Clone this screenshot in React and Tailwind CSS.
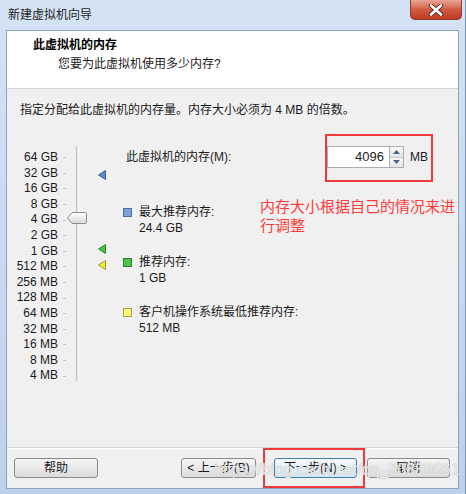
const FONT = { fontFamily: '"Liberation Sans", "Noto Sans CJK SC", sans-serif' }

// Scale labels from top to bottom
const STEPS = [
  '64 GB', '32 GB', '16 GB', '8 GB', '4 GB', '2 GB', '1 GB', '512 MB',
  '256 MB', '128 MB', '64 MB', '32 MB', '16 MB', '8 MB', '4 MB',
]

const LEGEND = [
  { label: '最大推荐内存:', value: '24.4 GB', box: 'bg-[#7fa2d4] border-[#4d6f9f]' },
  { label: '推荐内存:', value: '1 GB', box: 'bg-[#4cc24c] border-[#2a8a2a]' },
  { label: '客户机操作系统最低推荐内存:', value: '512 MB', box: 'bg-[#fff67a] border-[#a8a050]' },
]

function Marker({ fill, stroke, className }) {
  return (
    <svg width="8" height="10" viewBox="0 0 8 10" className={className}>
      <path d="M0.5 5 L7.5 0.5 L7.5 9.5 Z" fill={fill} stroke={stroke} strokeWidth="1" />
    </svg>
  )
}

function Button({ children, focused, className = '' }) {
  return (
    <div
      className={[
        'h-[20px] flex items-center justify-center rounded-[3px] border text-[12px] text-[#1a1a1a]',
        focused
          ? 'border-[#3c7fb1] bg-gradient-to-b from-[#f3f9fd] to-[#d6e9f6]'
          : 'border-[#8a8a8a] bg-gradient-to-b from-[#f4f4f4] to-[#dcdcdc]',
        className,
      ].join(' ')}
    >
      {children}
    </div>
  )
}

export default function App() {
  return (
    <div
      style={FONT}
      className="relative w-[466px] h-[494px] overflow-hidden flex flex-col bg-gradient-to-b from-[#d3e3f4] to-[#bcd2ea] border-r border-[#7b93b0]"
    >
      {/* ── Title bar ─────────────────────────────────────── */}
      <div className="h-[30px] shrink-0 flex items-start">
        <span className="ml-[8px] mt-[7px] text-[12px] leading-[16px] text-[#1e1e1e]">新建虚拟机向导</span>
        <div className="ml-auto mr-[3px] w-[52px] h-[20px] rounded-b-[5px] border border-t-0 border-[#8a3b30] bg-gradient-to-b from-[#e9a596] via-[#d25a43] to-[#c0391f] flex items-center justify-center">
          <svg width="16" height="12" viewBox="0 0 16 12">
            <path d="M3 1.5 L13 10.5 M13 1.5 L3 10.5" stroke="#5a2a22" strokeWidth="4.4" strokeLinecap="round" />
            <path d="M3 1.5 L13 10.5 M13 1.5 L3 10.5" stroke="#ffffff" strokeWidth="2.6" strokeLinecap="round" />
          </svg>
        </div>
      </div>

      {/* ── Client area ───────────────────────────────────── */}
      <div className="mx-[6px] mb-[5px] flex-1 flex flex-col border border-[#8da2bb] bg-[#f0f0f0]">

        {/* Header */}
        <div className="h-[58px] shrink-0 bg-white border-b border-[#d5d5d5] flex flex-col">
          <span className="ml-[26px] mt-[7px] text-[12px] leading-[14px] font-bold text-black">此虚拟机的内存</span>
          <span className="ml-[51px] mt-[5px] text-[12px] leading-[14px] text-[#1a1a1a]">您要为此虚拟机使用多少内存?</span>
        </div>

        {/* Body */}
        <div className="flex-1 flex flex-col text-[12px] text-[#1a1a1a]">
          <p className="ml-[13px] mt-[14px] leading-[14px]">
            指定分配给此虚拟机的内存量。内存大小必须为 4 MB 的倍数。
          </p>

          <div className="flex mt-[29px]">
            {/* Slider */}
            <div className="flex shrink-0">
              <div className="w-[51px] pt-[4px] flex flex-col">
                {STEPS.map((s) => (
                  <div key={s} className="h-[15.6px] leading-[15.6px] text-right whitespace-nowrap">{s}</div>
                ))}
              </div>
              <div className="ml-[5px] w-[3px] pt-[4px] flex flex-col">
                {STEPS.map((s) => (
                  <div key={s} className="h-[15.6px] flex items-center">
                    <div className="w-[3px] h-px bg-[#c4c4c4]" />
                  </div>
                ))}
              </div>
              <div className="relative ml-[10px] w-[3px] h-[235px] border-l border-[#c2c2c2] bg-[#e2e2e2] border-r border-r-white">
                <svg width="20" height="12" viewBox="0 0 20 12" className="absolute left-[-10px] top-[66px]">
                  <defs>
                    <linearGradient id="thumb" x1="0" y1="0" x2="0" y2="1">
                      <stop offset="0" stopColor="#ffffff" />
                      <stop offset="1" stopColor="#d8d8d8" />
                    </linearGradient>
                  </defs>
                  <path d="M0.5 6 L5 0.5 L18.5 0.5 Q19.5 0.5 19.5 1.5 L19.5 10.5 Q19.5 11.5 18.5 11.5 L5 11.5 Z" fill="url(#thumb)" stroke="#8c8c8c" />
                </svg>
              </div>
              <div className="relative ml-[19px] w-[25px]">
                <Marker fill="#5b8ad0" stroke="#37629e" className="absolute left-0 top-[24px]" />
                <Marker fill="#46c046" stroke="#278a27" className="absolute left-0 top-[98px]" />
                <Marker fill="#f2ea3a" stroke="#a39b1e" className="absolute left-0 top-[114px]" />
              </div>
            </div>

            {/* Right side */}
            <div className="flex-1 flex flex-col">
              <div className="flex items-center h-[22px]">
                <span className="ml-[3px] w-[201px]">此虚拟机的内存(M):</span>
                <div className="w-[62px] h-[22px] bg-white border border-[#abadb3] border-r-0 flex items-center justify-end pr-[5px] text-[13px]">4096</div>
                <div className="w-[15px] h-[22px] flex flex-col border border-[#abadb3]">
                  <div className="flex-1 flex items-center justify-center bg-gradient-to-b from-[#f7f7f7] to-[#e4e4e4] border-b border-[#c6c6c6]">
                    <svg width="7" height="4" viewBox="0 0 7 4"><path d="M0 4 L3.5 0 L7 4 Z" fill="#4d6185" /></svg>
                  </div>
                  <div className="flex-1 flex items-center justify-center bg-gradient-to-b from-[#f7f7f7] to-[#e4e4e4]">
                    <svg width="7" height="4" viewBox="0 0 7 4"><path d="M0 0 L3.5 4 L7 0 Z" fill="#4d6185" /></svg>
                  </div>
                </div>
                <span className="ml-[6px]">MB</span>
              </div>

              <div className="flex mt-[36px]">
                <LegendItem item={LEGEND[0]} className="w-[137px]" />
                <p className="-mt-[7px] text-[15px] leading-[19px] text-[#ff3b3b] w-[196px]">
                  内存大小根据自己的情况来进行调整
                </p>
              </div>
              <LegendItem item={LEGEND[1]} className="mt-[18px]" />
              <LegendItem item={LEGEND[2]} className="mt-[18px]" />
            </div>
          </div>
        </div>

        {/* Footer */}
        <div className="h-[41px] shrink-0 border-t border-[#d5d5d5] shadow-[inset_0_1px_0_#ffffff] flex items-start pt-[10px] pl-[7px]">
          <Button className="w-[84px]">帮助</Button>
          <Button className="ml-[83px] w-[75px]">&lt; 上一步(B)</Button>
          <Button focused className="ml-[18px] w-[83px]">下一步(N) &gt;</Button>
          <Button className="ml-[10px] w-[83px]">取消</Button>
        </div>
      </div>

      {/* ── Annotations drawn over the screenshot ─────────── */}
      <div className="absolute left-[325px] top-[134px] w-[108px] h-[48px] border-2 border-[#f03a3a]" />
      <div className="absolute left-[263px] top-[448px] w-[102px] h-[40px] border-2 border-[#f03a3a]" />
      <span className="absolute left-[214px] top-[460px] text-[16px] leading-[20px] text-white/75 [text-shadow:0_0_1px_#a0a0a0] whitespace-nowrap">
        https://blog.csdn.net/qq_30889661
      </span>
    </div>
  )
}

function LegendItem({ item, className = '' }) {
  return (
    <div className={`flex ${className}`}>
      <div className={`w-[9px] h-[9px] mt-[4px] border shrink-0 ${item.box}`} />
      <div className="ml-[7px] flex flex-col leading-[16px]">
        <span className="whitespace-nowrap">{item.label}</span>
        <span>{item.value}</span>
      </div>
    </div>
  )
}
